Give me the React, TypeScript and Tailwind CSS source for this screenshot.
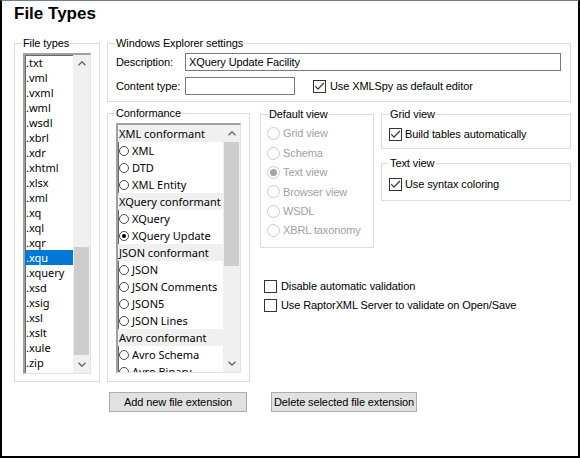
import { ReactNode } from 'react';

const fileTypes = [
  '.txt', '.vml', '.vxml', '.wml', '.wsdl', '.xbrl', '.xdr', '.xhtml', '.xlsx', '.xml', '.xq',
  '.xql', '.xqr', '.xqu', '.xquery', '.xsd', '.xsig', '.xsl', '.xslt', '.xule', '.zip',
];

type ConfRow = { label: string; header?: boolean; checked?: boolean };

const conformance: ConfRow[] = [
  { label: 'XML conformant', header: true },
  { label: 'XML' },
  { label: 'DTD' },
  { label: 'XML Entity' },
  { label: 'XQuery conformant', header: true },
  { label: 'XQuery' },
  { label: 'XQuery Update', checked: true },
  { label: 'JSON conformant', header: true },
  { label: 'JSON' },
  { label: 'JSON Comments' },
  { label: 'JSON5' },
  { label: 'JSON Lines' },
  { label: 'Avro conformant', header: true },
  { label: 'Avro Schema' },
  { label: 'Avro Binary' },
];

const defaultViews = ['Grid view', 'Schema', 'Text view', 'Browser view', 'WSDL', 'XBRL taxonomy'];

function GroupBox({ title, className = '', children }: { title: string; className?: string; children: ReactNode }) {
  return (
    <fieldset className={`border border-[#dcdcdc] min-w-0 ${className}`}>
      <legend className="ml-[7px] px-[1px] leading-[14px]">{title}</legend>
      {children}
    </fieldset>
  );
}

function CheckBox({ checked, className = '' }: { checked?: boolean; className?: string }) {
  return (
    <span className={`w-[13px] h-[13px] border border-[#333333] bg-white shrink-0 flex items-center justify-center ${className}`}>
      {checked && (
        <svg width="11" height="11" viewBox="0 0 11 11">
          <path d="M1.2 5.2 L4 8.2 L9.8 2" fill="none" stroke="#333333" strokeWidth="1.2" />
        </svg>
      )}
    </span>
  );
}

function Chevron({ down }: { down?: boolean }) {
  return (
    <svg width="8" height="5" viewBox="0 0 8 5">
      <polyline
        points={down ? '0.5,0.8 4,4.2 7.5,0.8' : '0.5,4.2 4,0.8 7.5,4.2'}
        fill="none"
        stroke="#606060"
        strokeWidth="1.3"
      />
    </svg>
  );
}

function ScrollBar({ thumbClass }: { thumbClass: string }) {
  return (
    <div className="w-[17px] h-full bg-[#f0f0f0] flex flex-col shrink-0">
      <div className="h-[17px] flex items-center justify-center shrink-0">
        <Chevron />
      </div>
      <div className="flex-1 min-h-0">
        <div className={`mx-[1px] bg-[#cdcdcd] ${thumbClass}`} />
      </div>
      <div className="h-[17px] flex items-center justify-center shrink-0">
        <Chevron down />
      </div>
    </div>
  );
}

function App() {
  return (
    <div className="w-[580px] h-[458px] bg-white border-t border-l-2 border-r-2 border-b-2 border-t-[#6f7f8f] border-l-black border-r-black border-b-black font-['Liberation_Sans',Arial,sans-serif] text-[11px] tracking-[-0.1px] text-black overflow-hidden">
      <div className="pl-[12px] pt-[3px] text-[17px] font-bold leading-[20px] tracking-normal">File Types</div>

      <div className="mt-[12px] ml-[12px] flex gap-[7px]">
        {/* file extensions */}
        <GroupBox title="File types" className="w-[86px] h-[346px]">
          <div className="mt-[3px] ml-[8px] w-[68px] h-[321px] flex border-t-2 border-l-2 border-r border-b border-t-[#a0a0a0] border-l-[#a0a0a0] border-r-[#e3e3e3] border-b-[#e3e3e3] shadow-[inset_1px_1px_0_#696969] overflow-hidden">
            <div className="flex-1 font-['Noto_Sans',sans-serif] text-[11px] leading-[15px] tracking-normal">
              {fileTypes.map((ext) => (
                <div
                  key={ext}
                  className={`h-[15px] pl-[1px] ${ext === '.xqu' ? 'bg-[#0078d7] text-white' : ''}`}
                >
                  {ext}
                </div>
              ))}
            </div>
            <ScrollBar thumbClass="mt-[175px] h-[108px]" />
          </div>
        </GroupBox>

        <div className="w-[464px]">
          <GroupBox title="Windows Explorer settings" className="h-[66px]">
            <div className="mt-[3px] pl-[8px] flex items-center h-[18px]">
              <span className="w-[69px]">Description:</span>
              <div className="w-[376px] h-[18px] border border-[#7a7a7a] pl-[3px] leading-[16px]">XQuery Update Facility</div>
            </div>
            <div className="mt-[6px] pl-[8px] flex items-center h-[18px]">
              <span className="w-[69px]">Content type:</span>
              <div className="w-[110px] h-[18px] border border-[#7a7a7a]" />
              <CheckBox checked className="ml-[18px]" />
              <span className="ml-[4px]">Use XMLSpy as default editor</span>
            </div>
          </GroupBox>

          <div className="mt-[4px] flex">
            <GroupBox title="Conformance" className="w-[143px] h-[276px]">
              <div className="mt-[3px] ml-[8px] w-[125px] h-[250px] flex border-t-2 border-l-2 border-r border-b border-t-[#a0a0a0] border-l-[#a0a0a0] border-r-[#e3e3e3] border-b-[#e3e3e3] shadow-[inset_1px_1px_0_#696969] overflow-hidden">
                <div className="flex-1 font-['Noto_Sans',sans-serif] text-[11px] leading-[17px] tracking-normal">
                  {conformance.map((row) =>
                    row.header ? (
                      <div key={row.label} className="h-[17px] bg-[#f0f0f0] pl-[1px] whitespace-nowrap">
                        {row.label}
                      </div>
                    ) : (
                      <div key={row.label} className="h-[17px] pl-[1px] flex items-center gap-[3px] whitespace-nowrap">
                        <span className="w-[10px] h-[10px] rounded-full border border-[#4a4a4a] bg-white flex items-center justify-center shrink-0">
                          {row.checked && <span className="w-[4px] h-[4px] rounded-full bg-black" />}
                        </span>
                        <span>{row.label}</span>
                      </div>
                    )
                  )}
                </div>
                <ScrollBar thumbClass="h-[124px]" />
              </div>
            </GroupBox>

            <div className="ml-[10px] pt-[1px] w-[311px]">
              <div className="flex gap-[7px]">
                <GroupBox title="Default view" className="w-[114px] h-[141px]">
                  <div className="mt-[3px] pl-[6px] text-[#a0a0a0]">
                    {defaultViews.map((v) => (
                      <div key={v} className="h-[19.4px] flex items-center gap-[3px] whitespace-nowrap">
                        <span className="w-[13px] h-[13px] rounded-full border border-[#cccccc] bg-white flex items-center justify-center shrink-0">
                          {v === 'Text view' && <span className="w-[7px] h-[7px] rounded-full bg-[#a3a3a3]" />}
                        </span>
                        <span>{v}</span>
                      </div>
                    ))}
                  </div>
                </GroupBox>

                <div className="w-[190px]">
                  <GroupBox title="Grid view" className="h-[42px]">
                    <div className="mt-[7px] pl-[7px] flex items-center h-[13px]">
                      <CheckBox checked />
                      <span className="ml-[3px]">Build tables automatically</span>
                    </div>
                  </GroupBox>
                  <GroupBox title="Text view" className="mt-[7px] h-[45px]">
                    <div className="mt-[8px] pl-[7px] flex items-center h-[13px]">
                      <CheckBox checked />
                      <span className="ml-[3px]">Use syntax coloring</span>
                    </div>
                  </GroupBox>
                </div>
              </div>

              <div className="mt-[29px] pl-[4px]">
                <div className="h-[19px] flex items-center">
                  <CheckBox />
                  <span className="ml-[4px]">Disable automatic validation</span>
                </div>
                <div className="h-[19px] flex items-center">
                  <CheckBox />
                  <span className="ml-[4px]">Use RaptorXML Server to validate on Open/Save</span>
                </div>
              </div>
            </div>
          </div>
        </div>
      </div>

      <div className="mt-[10px] ml-[107px] flex gap-[24px]">
        <button className="w-[138px] h-[20px] bg-[#e1e1e1] border border-[#adadad] text-[11px] leading-[18px]">
          Add new file extension
        </button>
        <button className="w-[146px] h-[20px] bg-[#e1e1e1] border border-[#adadad] text-[11px] leading-[18px]">
          Delete selected file extension
        </button>
      </div>
    </div>
  );
}

export default App;
